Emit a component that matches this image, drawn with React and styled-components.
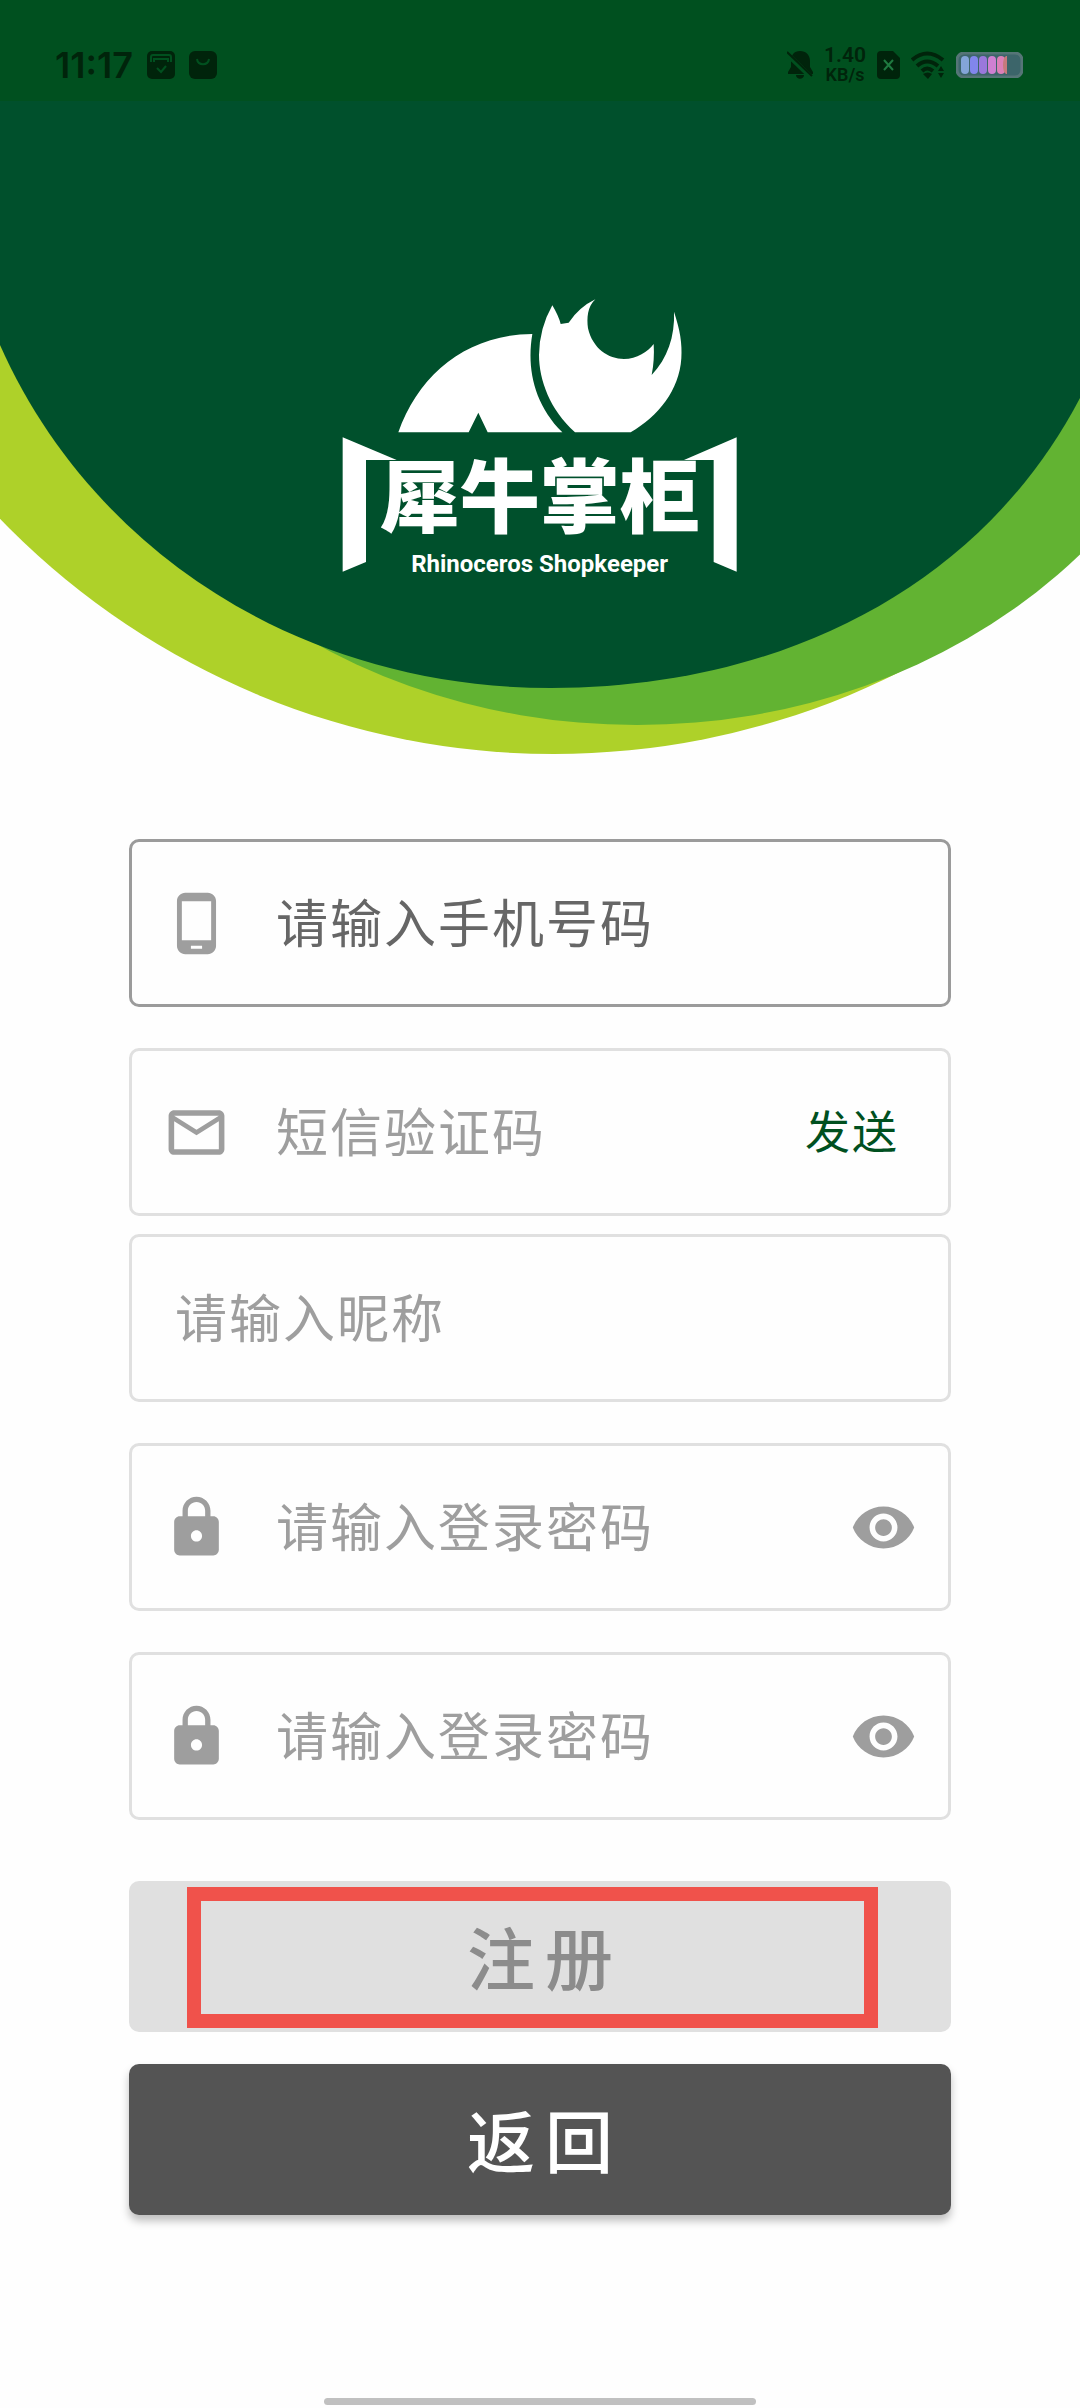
import React, { useState } from 'react'
import styled, { createGlobalStyle } from 'styled-components'
import { MdLock, MdMailOutline, MdPhoneAndroid, MdVisibility } from 'react-icons/md'

const GlobalStyle = createGlobalStyle`
    * {
        box-sizing: border-box;
    }

    body {
        margin: 0;
        background: #fefefe;
        font-family: "Noto Sans CJK SC", "Noto Sans", sans-serif;
    }
`

const Page = styled.div`
    display: flex;
    flex-direction: column;
    min-height: 100vh;
`

const StatusBar = styled.div`
    display: flex;
    align-items: center;
    justify-content: space-between;
    height: 101px;
    padding: 28px 57px 0 55px;
    background: #00501f;
    color: #00240b;
    font-family: Roboto, sans-serif;
`

const StatusGroup = styled.div`
    display: flex;
    align-items: center;
    gap: ${props => props.$gap}px;

    svg {
        display: block;
    }
`

const Clock = styled.span`
    font-family: Inter, Roboto, sans-serif;
    font-size: 36px;
    line-height: 40px;
    font-weight: 600;
`

const NetSpeed = styled.div`
    display: flex;
    flex-direction: column;
    align-items: center;
    font-weight: 600;
    font-size: 18px;
    line-height: 20px;
`

const NetValue = styled.span`
    font-size: 21px;
`

const HeroArt = styled.svg`
    display: block;
    width: 100%;
    height: auto;
`

const Form = styled.form`
    display: flex;
    flex-direction: column;
    padding: 83px 129px 0;
`

const Field = styled.label`
    display: flex;
    align-items: center;
    gap: 46px;
    height: 168px;
    margin-bottom: ${props => (props.$tight ? 18 : 41)}px;
    padding: 0 31px;
    border: 3px solid ${props => (props.$active ? '#9b9b9b' : '#e0e0e0')};
    border-radius: 10px;
    color: #9e9e9e;

    > svg {
        flex: none;
    }
`

const TextInput = styled.input`
    flex: 1;
    min-width: 0;
    padding: 0 0 4px;
    padding-left: ${props => (props.$inset ? 12 : 0)}px;
    border: 0;
    outline: 0;
    background: transparent;
    color: #333;
    font-family: inherit;
    font-size: 52px;
    line-height: 76px;
    letter-spacing: 2px;

    &::placeholder {
        color: ${props => (props.$active ? '#666' : '#9e9e9e')};
        opacity: 1;
    }
`

const SendButton = styled.button`
    padding: 0 18px 4px;
    border: 0;
    background: transparent;
    color: #00501f;
    font-family: inherit;
    font-size: 45px;
    line-height: 66px;
    letter-spacing: 2px;
`

const EyeButton = styled.button`
    display: flex;
    padding: 0;
    border: 0;
    background: transparent;
    color: inherit;
`

const Actions = styled.div`
    display: flex;
    flex-direction: column;
    gap: 32px;
    padding-top: 20px;
`

const RegisterArea = styled.div`
    position: relative;
`

const ActionButton = styled.button`
    display: block;
    width: 100%;
    height: 151px;
    padding: 0 0 2px 10px;
    border: 0;
    border-radius: 10px;
    background: ${props => (props.disabled ? '#e0e0e0' : '#545454')};
    color: ${props => (props.disabled ? '#8c8c8c' : '#fff')};
    box-shadow: ${props => (props.disabled ? 'none' : '0 6px 8px rgba(0, 0, 0, 0.25)')};
    font-family: inherit;
    font-size: 68px;
    line-height: 98px;
    font-weight: 500;
    letter-spacing: 10px;
`

const Highlight = styled.div`
    position: absolute;
    inset: 6px 73px 4px 58px;
    border: 14px solid #f0524b;
    pointer-events: none;
`

const Footer = styled.footer`
    display: flex;
    justify-content: center;
    margin-top: auto;
    padding-bottom: 3px;
`

const HomeIndicator = styled.div`
    width: 40%;
    height: 7px;
    border-radius: 4px;
    background: #c0c0c0;
`

const OrderIcon = () => (
    <svg width="28" height="28" viewBox="0 0 28 28" fill="none">
        <rect width="28" height="28" rx="5" fill="currentColor" />
        <path d="M4 11V6q0-2 2-2h16q2 0 2 2v5M7 11V8h14v3" stroke="#00501f" strokeWidth="2" />
        <path d="M10 17l4 4 5-6" stroke="#00501f" strokeWidth="2" />
    </svg>
)

const BagIcon = () => (
    <svg width="28" height="28" viewBox="0 0 28 28" fill="none">
        <rect width="28" height="28" rx="6" fill="currentColor" />
        <path d="M8 8c1 7 11 7 12 0" stroke="#00501f" strokeWidth="2" />
    </svg>
)

const MutedIcon = () => (
    <svg width="26" height="28" viewBox="0 0 26 28">
        <path d="M13 0c6 0 10 4 10 10v6l3 5v2H1v-2l3-5v-6C4 4 7 0 13 0zM9 24h8c0 5-8 5-8 0z" fill="currentColor" />
        <path d="M-1 2l26 25" stroke="#00501f" strokeWidth="5" />
        <path d="M0 1l25 24" stroke="currentColor" strokeWidth="2" />
    </svg>
)

const SimIcon = () => (
    <svg width="23" height="28" viewBox="0 0 23 28">
        <path d="M4 0h12l7 7v17q0 4-4 4H4q-4 0-4-4V4q0-4 4-4z" fill="currentColor" />
        <path d="M7 9l9 10M16 9L7 19" stroke="#1f7a40" strokeWidth="2" />
    </svg>
)

const WifiIcon = () => (
    <svg width="34" height="28" viewBox="0 0 34 28" fill="none">
        <path d="M1 9q15-13 31 0M6 15q10-9 21 0M11 20q5-5 11 0" stroke="currentColor" strokeWidth="4" />
        <path d="M12 23q5-3 9 0l-4 5zM30 15l3 5h-6zM27 22h6l-3 5z" fill="currentColor" />
    </svg>
)

const batteryCells = ['#83a5d8', '#8186ec', '#9a78dc', '#cf80d2', '#dc80b8']

const BatteryIcon = () => (
    <svg width="67" height="26" viewBox="0 0 67 26">
        <rect x="1" y="1" width="65" height="24" rx="7" fill="#3c656a" stroke="#557577" strokeWidth="3" />
        {batteryCells.map((color, i) => (
            <rect key={color} x={5 + i * 9} y="4" width="8" height="18" rx="4" fill={color} />
        ))}
        <path d="M51 4v18h-1q-3-2-3-9t3-9z" fill="#c77a7c" />
    </svg>
)

const Logo = () => (
    <svg x="320" y="280" width="440" height="310" viewBox="0 0 1320 930" fill="#fff">
        <path d="M235 457C296 284 440 163 637 162C620 262 640 370 727 457H503L475 398L446 457Z" />
        <path d="M697 76Q716 108 722 132L746 128Q778 81 826 58C802 80 800 115 804 145C818 206 865 237 912 237C950 237 985 215 1001 192Q1004 240 995 285C1042 235 1065 170 1062 95C1080 150 1087 190 1084 235C1078 330 1015 410 932 457H765C690 390 657 300 657 225Q658 145 697 76Z" />
        <path d="M68 472L230 540H138V846L68 875Z" />
        <path d="M1250 472L1092 540H1181V846L1250 875Z" />
        <text x="659" y="738" textAnchor="middle" fontSize="240" fontWeight="900" fontFamily="'Noto Sans CJK SC', sans-serif">
            犀牛掌柜
        </text>
        <text x="659" y="877" textAnchor="middle" fontSize="72" fontWeight="700" fontFamily="Roboto, sans-serif">
            Rhinoceros Shopkeeper
        </text>
    </svg>
)

// starts right under the status bar, so the view box skips its 101 units
const Hero = () => (
    <HeroArt viewBox="0 101 1080 655" role="img" aria-label="犀牛掌柜 Rhinoceros Shopkeeper">
        <circle cx="554" cy="-16" r="770" fill="#aed129" />
        <ellipse cx="637" cy="212" rx="595" ry="513" fill="#62b332" />
        <path d="M0 101V345C92 552 302 688 551 688C788 688 984 582 1080 398V101Z" fill="#00502c" />
        <Logo />
    </HeroArt>
)

const PasswordField = ({ label }) => {
    const [visible, setVisible] = useState(false)

    return (
        <Field>
            <MdLock size={67} />
            <TextInput type={visible ? 'text' : 'password'} placeholder="请输入登录密码" aria-label={label} />
            <EyeButton type="button" aria-label="显示密码" onClick={() => setVisible(!visible)}>
                <MdVisibility size={67} />
            </EyeButton>
        </Field>
    )
}

export default function App() {
    return (
        <Page>
            <GlobalStyle />
            <StatusBar>
                <StatusGroup $gap={14}>
                    <Clock>11:17</Clock>
                    <OrderIcon />
                    <BagIcon />
                </StatusGroup>
                <StatusGroup $gap={11}>
                    <MutedIcon />
                    <NetSpeed>
                        <NetValue>1.40</NetValue>
                        <span>KB/s</span>
                    </NetSpeed>
                    <SimIcon />
                    <WifiIcon />
                    <BatteryIcon />
                </StatusGroup>
            </StatusBar>
            <Hero />
            <Form onSubmit={e => e.preventDefault()}>
                <Field $active>
                    <MdPhoneAndroid size={67} />
                    <TextInput $active type="tel" placeholder="请输入手机号码" aria-label="手机号码" />
                </Field>
                <Field $tight>
                    <MdMailOutline size={67} />
                    <TextInput placeholder="短信验证码" aria-label="短信验证码" />
                    <SendButton type="button">发送</SendButton>
                </Field>
                <Field>
                    <TextInput $inset placeholder="请输入昵称" aria-label="昵称" />
                </Field>
                <PasswordField label="登录密码" />
                <PasswordField label="确认登录密码" />
                <Actions>
                    <RegisterArea>
                        <ActionButton type="submit" disabled>注册</ActionButton>
                        <Highlight />
                    </RegisterArea>
                    <ActionButton type="button">返回</ActionButton>
                </Actions>
            </Form>
            <Footer>
                <HomeIndicator />
            </Footer>
        </Page>
    )
}
